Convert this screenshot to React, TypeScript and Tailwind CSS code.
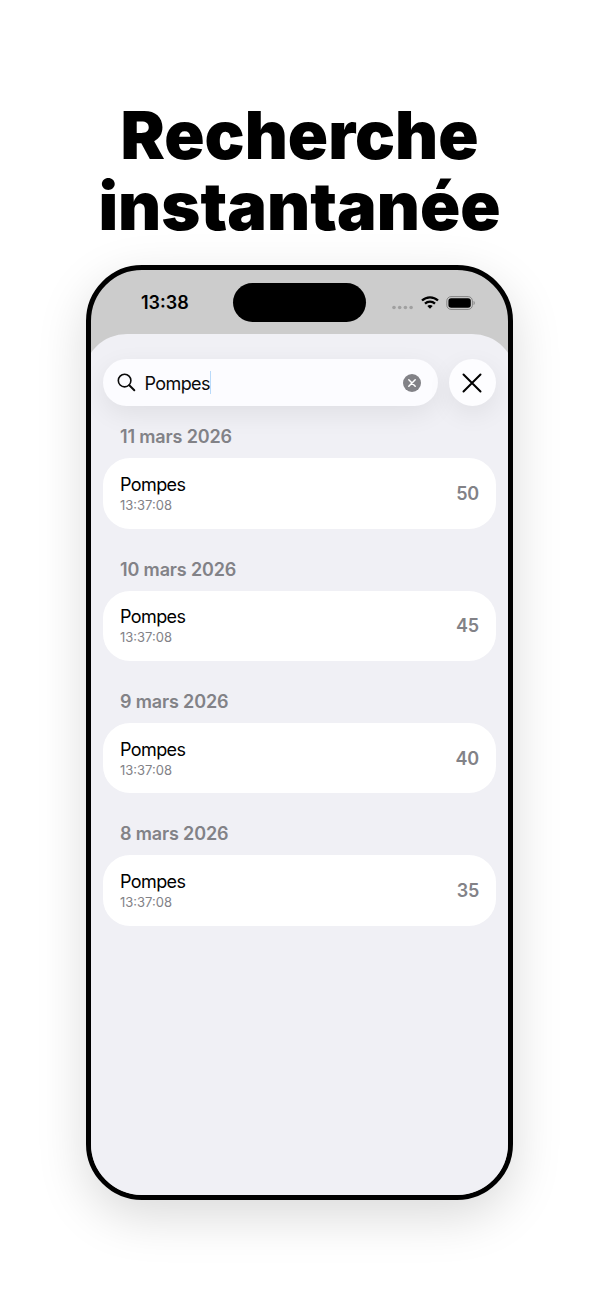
import React from 'react';

interface Entry {
  date: string;
  name: string;
  time: string;
  reps: number;
}

const entries: Entry[] = [
  { date: '11 mars 2026', name: 'Pompes', time: '13:37:08', reps: 50 },
  { date: '10 mars 2026', name: 'Pompes', time: '13:37:08', reps: 45 },
  { date: '9 mars 2026', name: 'Pompes', time: '13:37:08', reps: 40 },
  { date: '8 mars 2026', name: 'Pompes', time: '13:37:08', reps: 35 },
];

const StatusBar = () => (
  <div className="flex h-[77px] items-start pl-[50px] pt-[13px]">
    <span className="mt-[6px] w-[92px] text-[18px] leading-[28px] font-semibold text-black">13:38</span>
    <div className="h-[39px] w-[133px] rounded-full bg-black" />
    <div className="ml-[26px] mt-[12px] flex items-center">
      <svg width="22" height="5" viewBox="0 0 22 5" className="mt-[10px]" fill="#a0a0a0">
        <circle cx="2" cy="2.5" r="1.8" />
        <circle cx="7.7" cy="2.5" r="1.8" />
        <circle cx="13.4" cy="2.5" r="1.8" />
        <circle cx="19.1" cy="2.5" r="1.8" />
      </svg>
      <svg width="18" height="13" viewBox="0 0 18 13" className="ml-[7px]" fill="none" stroke="#000" strokeWidth="2.3">
        <path d="M1 4.5C5.5.2 12.5.2 17 4.5" />
        <path d="M4 7.6c2.8-2.6 7.2-2.6 10 0" />
        <path d="M9 12.8 6.3 10.1c1.5-1.4 3.9-1.4 5.4 0z" fill="#000" stroke="none" />
      </svg>
      <svg width="30" height="14" viewBox="0 0 30 14" className="ml-[7px]">
        <rect x=".8" y=".6" width="25.6" height="12.8" rx="4.2" fill="none" stroke="#858585" strokeWidth="1" />
        <rect x="2.4" y="2.2" width="22.4" height="9.6" rx="2.8" fill="#000" />
        <path d="M27.6 4.8v4.4c1.6-.7 1.6-3.7 0-4.4z" fill="#858585" />
      </svg>
    </div>
  </div>
);

const SearchBar = () => (
  <div className="flex gap-[11px]">
    <div className="flex h-[47px] w-[335px] items-center rounded-full bg-[#fcfcff] pl-[14px] pr-[17px] shadow-[0_8px_26px_rgba(0,0,0,0.07)]">
      <svg width="19" height="19" viewBox="0 0 19 19" fill="none" stroke="#0a0a0a" strokeLinecap="round">
        <circle cx="7.6" cy="7.6" r="6.3" strokeWidth="1.6" />
        <path d="m12.3 12.3 5 4.9" strokeWidth="2" />
      </svg>
      <span className="ml-[8.5px] pt-[1px] text-[18px] tracking-[-0.6px] text-[#0a0a0a]">Pompes</span>
      <span className="h-[23px] w-[1.5px] bg-[#b9dafa]" />
      <svg width="18" height="18" viewBox="0 0 18 18" className="ml-auto">
        <circle cx="9" cy="9" r="9" fill="#828287" />
        <path d="m5.8 5.8 6.4 6.4m0-6.4-6.4 6.4" stroke="#fff" strokeWidth="1.5" strokeLinecap="round" />
      </svg>
    </div>
    <button className="flex size-[47px] items-center justify-center rounded-full bg-[#fdfdff] shadow-[0_8px_26px_rgba(0,0,0,0.07)]">
      <svg width="20" height="20" viewBox="0 0 20 20" className="mr-[1px]" fill="none" stroke="#000" strokeWidth="2" strokeLinecap="round">
        <path d="m1.5 1.5 17 17m0-17-17 17" />
      </svg>
    </button>
  </div>
);

const EntrySection = ({ entry }: { entry: Entry }) => (
  <section className="h-[132.4px]">
    <h2 className="h-[35px] pl-[17px] text-[18px] leading-[28px] font-semibold tracking-[-0.15px] text-[#828287]">
      {entry.date}
    </h2>
    <div className="flex h-[70.5px] items-center justify-between rounded-[27px] bg-white px-[17px]">
      <div className="pt-[1px]">
        <p className="text-[18px] leading-[22px] tracking-[-0.6px] text-black">{entry.name}</p>
        <p className="text-[13px] leading-[18px] text-[#828287]">{entry.time}</p>
      </div>
      <span className="text-[18px] font-semibold tracking-[-0.2px] text-[#828287]">{entry.reps}</span>
    </div>
  </section>
);

export default function App() {
  return (
    <div className="flex h-[1300px] w-[599px] flex-col items-center overflow-hidden bg-white font-['Inter',sans-serif]">
      <h1 className="mt-[100px] text-center text-[66.5px] leading-[71px] font-black text-black">
        Recherche
        <br />
        instantanée
      </h1>
      <div className="mt-[23px] h-[935px] w-[427px] overflow-hidden rounded-[56px] border-[5px] border-black bg-[#cccccc] shadow-[0_16px_50px_rgba(0,0,0,0.15)]">
        <StatusBar />
        {/* the sheet is wider than the screen, so its corners get cut by the frame */}
        <main className="-mx-[8px] -mt-[13px] h-[870px] rounded-t-[44px] bg-[#f0f0f5] px-[20px] pt-[25.2px]">
          <SearchBar />
          <div className="pt-[17px]">
            {entries.map((entry) => (
              <EntrySection key={entry.date} entry={entry} />
            ))}
          </div>
        </main>
      </div>
    </div>
  );
}
